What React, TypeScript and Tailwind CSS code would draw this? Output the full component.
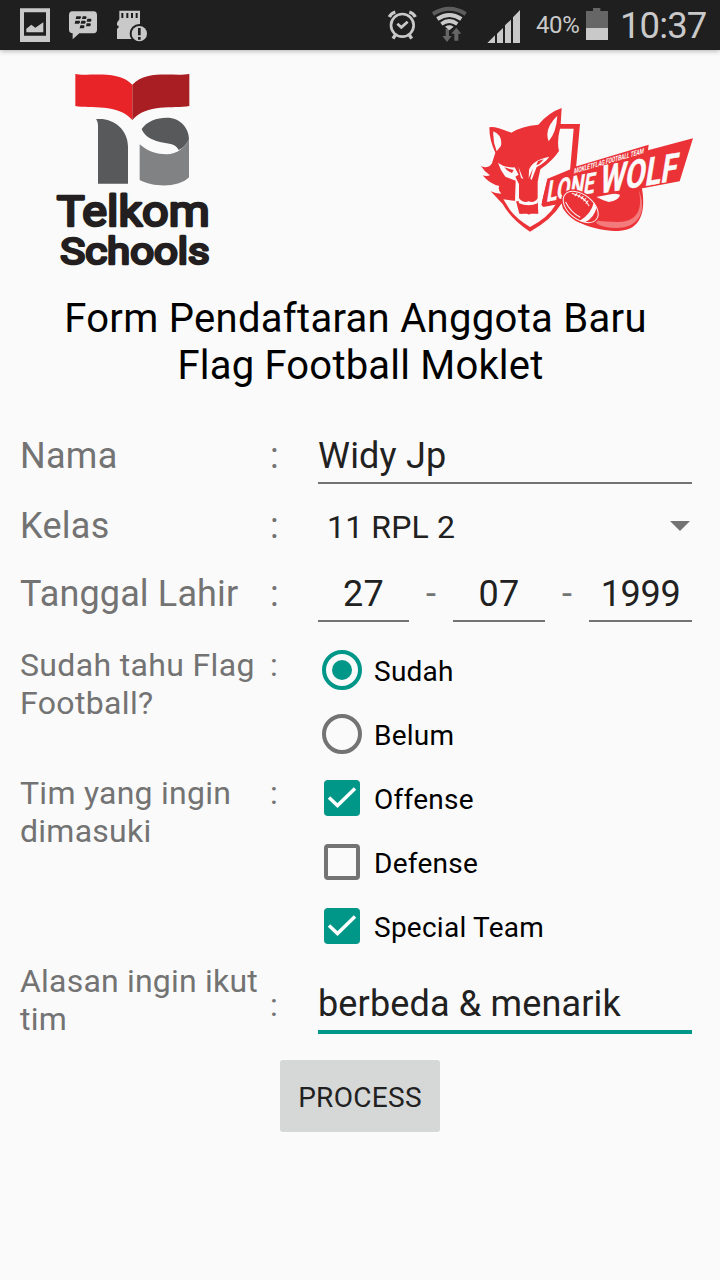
import type { ReactNode } from "react";

function StatusBar() {
  return (
    <header className="flex h-[50px] shrink-0 items-center bg-[#1f1f1f] text-[#c9c9c9] shadow-[0_1px_5px_rgba(0,0,0,0.3)]">
      <svg className="ml-5 h-[50px] w-[30px]" viewBox="0 0 90 150">
        <path fill="#c9c9c9" fillRule="evenodd" d="M0 25H90V126H0ZM12 37V107H78V37Z" />
        <path fill="#c9c9c9" d="M19 97V86L34 74L46 83L70 67V97Z" />
      </svg>
      <svg className="ml-[19px] h-[50px] w-[28px]" viewBox="0 0 84 150">
        <path fill="#c9c9c9" d="M10 34H74Q84 35 84 45V89Q84 99 74 100H31L11 118V100Q0 99 0 89V45Q0 35 10 34Z" />
        <path fill="#1f1f1f" d="M22 49h13q4 4-2 8H20ZM41 49h10q5 4-1 8H39ZM19 62h13q4 4-2 9H17ZM37 62h11q5 4-1 9H35ZM55 56h11q4 4-1 9H53ZM34 76h11q4 4-1 9H32ZM53 70h11q4 4-1 9H51Z" />
      </svg>
      <svg className="ml-[19px] h-[50px] w-[32px]" viewBox="0 0 96 150">
        <path fill="#c9c9c9" d="M10 32H72V117H3V87L8 82V78L3 76V68L10 58Z" />
        <path stroke="#1f1f1f" strokeWidth="6" d="M19 39V54M34 39V54M48 39V54M62 39V54" />
        <circle cx="70" cy="101" r="29" fill="#1f1f1f" />
        <circle cx="70" cy="101" r="23" fill="#c9c9c9" />
        <path stroke="#1f1f1f" strokeWidth="8" d="M70 84V106M70 111V119" />
      </svg>
      <svg className="ml-[239px] h-[50px] w-[30px]" viewBox="0 0 90 150" fill="none" stroke="#c9c9c9">
        <circle cx="46" cy="76" r="34" strokeWidth="8" />
        <path strokeWidth="8" d="M31 71L43 82L62 65" />
        <path strokeWidth="10" d="M7 51Q12 40 25 36M85 51Q80 40 67 36M25 105L18 116M67 105L74 116" />
      </svg>
      <svg className="ml-[14px] h-[50px] w-[37px]" viewBox="0 0 111 150" fill="none">
        <path stroke="#5d5d5d" strokeWidth="12" d="M6 42Q55 11 104 42" />
        <path stroke="#c9c9c9" strokeWidth="12" d="M19 57Q55 33 91 57" />
        <path stroke="#c9c9c9" strokeWidth="11" d="M31 72Q55 54 79 72" />
        <path fill="#666" d="M44 87H54V108H62L48 126L34 108H44ZM70 122V101H61L76 83L91 101H82V122Z" />
        <path fill="#c9c9c9" d="M42 80Q55 72 68 80L55 91Z" />
      </svg>
      <svg className="ml-[19px] h-[50px] w-[34px]" viewBox="0 0 102 150" fill="#c9c9c9">
        <path d="M1 129L24 106V129ZM30 101L48 84V129H30ZM54 76L72 59V129H54ZM78 52L99 30V129H78Z" />
      </svg>
      <span className="ml-[15px] w-[44px] whitespace-nowrap text-[24px] leading-[52px] tracking-[-0.4px]">40%</span>
      <svg className="ml-[6px] h-[50px] w-[22px]" viewBox="0 0 66 150">
        <path fill="#666" d="M0 33H21V24H43V33H66V84H0Z" />
        <path fill="#c9c9c9" d="M0 84H66V120H0Z" />
      </svg>
      <span className="ml-[12px] whitespace-nowrap text-[36.5px] leading-[49px] tracking-[-0.9px]">10:37</span>
    </header>
  );
}

function SchoolLogo() {
  return (
    <svg className="ml-10 mt-[10px] h-[220px] w-[190px]" viewBox="0 0 570 660">
      <path fill="#e92428" d="M106 42C140 50 235 28 277 74V180C235 130 150 147 106 138Z" />
      <path fill="#a91e22" d="M277 74C320 28 400 50 448 42V138C400 147 320 130 277 180Z" />
      <path fill="#58595b" d="M168 178C215 172 264 205 264 260V371H174V198C174 189 172 183 168 178Z" />
      <path fill="#808284" d="M299 253C325 275 350 283 380 283C410 283 437 262 447 237V352C415 384 340 382 299 360Z" />
      <path fill="#58595b" d="M305 207C320 184 350 173 380 173C422 173 447 205 447 237C440 253 430 264 416 270C407 249 380 251 360 246C330 239 312 226 305 207Z" />
      <g fill="#231f20" stroke="#231f20" strokeWidth="8" strokeLinejoin="round" fontFamily="Roboto" fontWeight="400">
        <text x="50" y="499" fontSize="129" textLength="459" lengthAdjust="spacingAndGlyphs">Telkom</text>
        <text x="61" y="612" fontSize="109" textLength="448" lengthAdjust="spacingAndGlyphs">Schools</text>
      </g>
    </svg>
  );
}

function TeamLogo() {
  return (
    <svg className="mr-[10px] mt-[50px] h-[140px] w-[240px] overflow-visible" viewBox="0 0 720 420">
      <path fill="#ea3237" d="M272 72H330L318 205L275 310Q245 360 180 395Q125 360 98 312L62 274Q76 281 94 281Q82 268 88 258Q58 252 38 226Q48 230 60 226Q42 214 33 198Q55 208 66 190L76 158Q58 122 58 82Q70 76 124 98Q155 78 205 74Q235 38 275 24Z" />
      <path fill="#fafafa" d="M270 86H311L300 212L232 237L216 305L258 312Q235 353 180 381Q140 357 120 330L100 298L138 303L148 341H205L203 308V245L211 208Q248 182 267 153Q260 125 270 86Z" />
      <path fill="#fafafa" d="M70 94Q98 106 93 137L80 154Q68 125 70 94ZM262 47Q259 97 236 124Q221 86 262 47Z" />
      <path fill="#fafafa" d="M84 188Q106 204 134 202L146 224L136 230L147 252V304H135L137 242L106 230Q91 211 84 188ZM177 210Q185 181 238 170Q226 188 200 201L185 240L181 236L189 205L176 235ZM145 200L160 238L153 233Z" />
      <path fill="#ea3237" d="M103 202L131 210L126 219Q112 215 103 202ZM204 183L221 178L207 193L199 195ZM148 309Q176 320 204 309L200 340L188 335L177 344L165 336L153 343Z" />
      <path fill="#fafafa" d="M146 293Q160 311 176 304Q192 311 204 294L203 310Q176 322 147 310Z" />
      <path fill="#ea3237" d="M278 282L514 255C530 335 513 390 445 393C385 393 310 373 278 323Z" />
      <path fill="#f37b7c" d="M506 270C522 340 492 371 430 365Q398 366 374 360Q378 381 438 384C510 384 532 330 506 270Z" />
      <path fill="#fafafa" d="M375 289Q416 275 450 284Q448 301 416 306Q397 301 375 289Z" />
      <path fill="#ea3237" d="M233 236L309 205L315 200L536 134L534 151L669 115L629 244L220 321L214 315Z" />
      <g fill="#fafafa" stroke="#fafafa" fontFamily="Roboto" fontWeight="700">
        <text transform="matrix(1 -.19 -.16 1 228 305)" fontSize="88" strokeWidth="1" textLength="143" lengthAdjust="spacingAndGlyphs">LONE</text>
        <text transform="matrix(1 -.17 -.16 1 386 281)" fontSize="119" strokeWidth="1" textLength="232" lengthAdjust="spacingAndGlyphs">WOLF</text>
        <text transform="matrix(.96 -.28 -.15 1 311 221)" fontSize="23" strokeWidth="0" textLength="218" lengthAdjust="spacingAndGlyphs">MOKLETFLAG FOOTBALL TEAM</text>
      </g>
      <g transform="rotate(38 332 321)">
        <ellipse cx="332" cy="321" rx="66" ry="43" fill="#ea3237" />
        <ellipse cx="332" cy="321" rx="60" ry="37" fill="none" stroke="#fafafa" strokeWidth="3" />
        <path fill="#fafafa" d="M355 286Q370 321 355 356L371 348Q383 321 371 294Z" />
        <path fill="none" stroke="#fafafa" strokeWidth="3" d="M286 305Q320 290 350 303M298 295V306M308 292V303M318 290V302M328 290V302M338 292V304M287 337Q318 352 350 346" />
      </g>
    </svg>
  );
}

function Label({ children, className }: { children: ReactNode; className: string }) {
  return <div className={`w-[250px] shrink-0 whitespace-nowrap text-[#737373] ${className}`}>{children}</div>;
}

function Colon({ className }: { className: string }) {
  return <div className={`w-12 shrink-0 text-[#737373] ${className}`}>:</div>;
}

function Radio({ label, checked }: { label: string; checked?: boolean }) {
  return (
    <div className="flex h-16 items-center gap-3 pl-1 text-[28px] tracking-[0.25px] text-black">
      <span className={`flex size-10 items-center justify-center rounded-full border-4 ${checked ? "border-[#009688]" : "border-[#737373]"}`}>
        {checked && <span className="size-5 rounded-full bg-[#009688]" />}
      </span>
      <span className="pt-1">{label}</span>
    </div>
  );
}

function Checkbox({ label, checked }: { label: string; checked?: boolean }) {
  return (
    <div className="flex h-16 items-center gap-[14px] pl-1.5 text-[28px] tracking-[0.25px] text-black">
      <span className={`flex size-9 items-center justify-center rounded ${checked ? "bg-[#009688]" : "border-4 border-[#737373]"}`}>
        {checked && (
          <svg className="size-9" viewBox="0 0 36 36" fill="none" stroke="white" strokeWidth="3.5">
            <path d="M5 17.5L13.5 25.5L31 8.5" />
          </svg>
        )}
      </span>
      <span className="pt-1">{label}</span>
    </div>
  );
}

function DatePart({ value, className }: { value: string; className: string }) {
  return <div className={`border-b-2 border-[#737373] text-center text-[36px] leading-[52px] text-[#212121] ${className}`}>{value}</div>;
}

export default function App() {
  return (
    <div className="flex h-[1280px] w-[720px] flex-col overflow-hidden bg-[#fafafa] font-['Roboto',sans-serif]">
      <StatusBar />
      <div className="flex h-[245px] shrink-0 items-start justify-between">
        <SchoolLogo />
        <TeamLogo />
      </div>
      <h1 className="flex h-[135px] shrink-0 flex-col text-center text-[40px] leading-[47px] tracking-[0.3px] text-black">
        <span className="pr-[9px]">Form Pendaftaran Anggota Baru</span>
        <span className="tracking-[0.2px] pl-[1px]">Flag Football Moklet</span>
      </h1>
      <main className="flex flex-col pl-5 pr-7">
        <div className="flex h-[54px] text-[36px] leading-[52px] tracking-[0.3px]">
          <Label className="">Nama</Label>
          <Colon className="" />
          <div className="flex-1 border-b-2 border-[#737373] tracking-[0.2px] text-[#212121]">Widy Jp</div>
        </div>
        <div className="flex h-[84px] text-[36px] leading-[84px] tracking-[0.3px]">
          <Label className="">Kelas</Label>
          <Colon className="" />
          <div className="flex flex-1 items-center justify-between pl-[9px] pr-0.5 pt-0.5 text-[32px] tracking-[0.15px] text-[#212121]">
            <span>11 RPL 2</span>
            <svg className="-mt-0.5 h-[10px] w-5" viewBox="0 0 20 10">
              <path fill="#737373" d="M0 0H20L10 10Z" />
            </svg>
          </div>
        </div>
        <div className="flex h-[54px] text-[36px] leading-[52px] tracking-[0.15px]">
          <Label className="">Tanggal Lahir</Label>
          <Colon className="" />
          <div className="flex flex-1 text-[#737373]">
            <DatePart value="27" className="w-[91px]" />
            <span className="w-11 text-center">-</span>
            <DatePart value="07" className="w-[92px]" />
            <span className="w-11 text-center">-</span>
            <DatePart value="1999" className="flex-1 tracking-[-0.3px]" />
          </div>
        </div>
        <div className="mt-4 flex h-32 text-[32px] leading-[38px] tracking-[0.35px]">
          <Label className="pt-2">Sudah tahu Flag<br />Football?</Label>
          <Colon className="pt-2" />
          <div>
            <Radio label="Sudah" checked />
            <Radio label="Belum" />
          </div>
        </div>
        <div className="flex h-48 text-[32px] leading-[38px] tracking-[0.25px]">
          <Label className="pt-2">Tim yang ingin<br />dimasuki</Label>
          <Colon className="pt-2" />
          <div>
            <Checkbox label="Offense" checked />
            <Checkbox label="Defense" />
            <Checkbox label="Special Team" checked />
          </div>
        </div>
        <div className="flex h-[76px] pt-1 text-[32px] leading-[38px] tracking-[0.2px]">
          <Label className="">Alasan ingin ikut<br />tim</Label>
          <Colon className="pt-6" />
          <div className="mt-4 h-14 flex-1 border-b-4 border-[#009688] text-[36px] leading-[52px] tracking-[0.15px] text-[#212121]">
            berbeda &amp; menarik
          </div>
        </div>
      </main>
      <button className="mt-[26px] h-[72px] w-40 shrink-0 self-center rounded-[3px] bg-[#d6d7d7] pt-1 text-[28px] tracking-[0.3px] text-[#212121]">
        PROCESS
      </button>
    </div>
  );
}
